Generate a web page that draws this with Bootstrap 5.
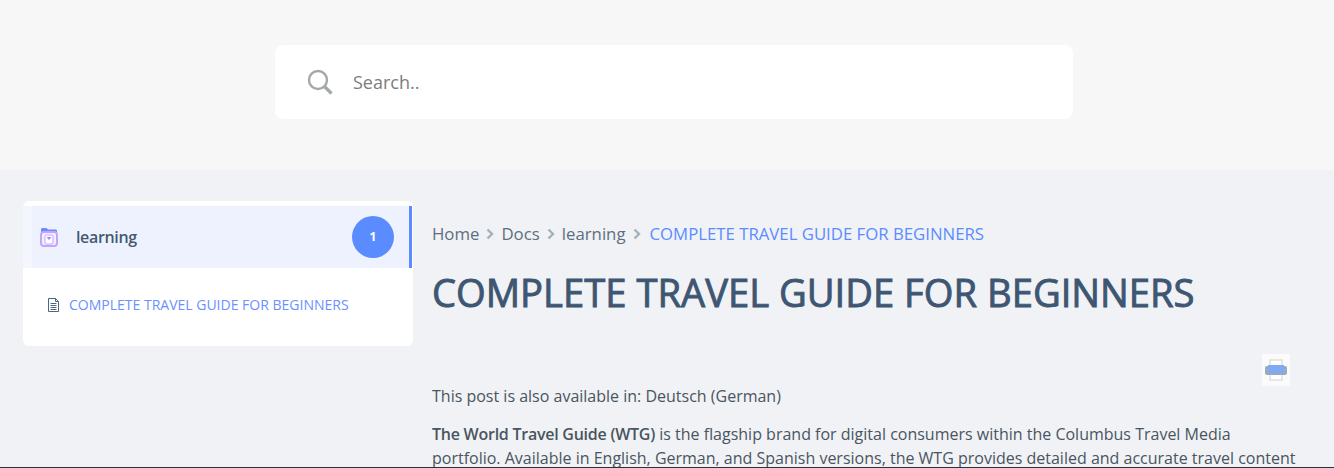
<!DOCTYPE html>
<html lang="en">
<head>
<meta charset="utf-8">
<title>Complete Travel Guide for Beginners</title>
<link rel="stylesheet" href="https://cdn.jsdelivr.net/npm/bootstrap@5.3.0/dist/css/bootstrap.min.css">
<style>
html,body{height:468px;overflow:hidden}
body{background:#f0f2f6;font-family:"Open Sans","Noto Sans",sans-serif;color:#3f4d5c;border-bottom:1px solid #2b3338}
.hero-band{height:170px;background:#f7f7f7;padding-top:45px}
.search-box{width:798px;height:74px;margin-left:275px;background:#fff;border-radius:8px;padding-left:32px;gap:20px}
.search-text{font-size:18px;color:#7d7d7d}
.page-wrap{padding:31px 0 0 23px}
.side-panel{width:390px;height:145px;background:#fff;border-radius:6px;padding-top:5px}
.side-active{height:62px;background:linear-gradient(90deg,#f4f6fe 0,#f4f6fe 9px,#eef2ff 9px);border-right:3px solid #5b8cff;margin-right:1px;padding:0 15px 0 16px}
.side-name{font-size:16px;font-weight:600;letter-spacing:-.35px;color:#435a73;margin-left:17px}
.side-count{width:42px;height:42px;border-radius:50%;background:#5b8cff;color:#fff;font-size:12px;font-weight:700}
.side-doc{padding:26px 0 0 24px;gap:9px;font-size:14px;color:#6b90ff;line-height:22px}
.main-col{width:866px;margin-left:19px;padding-top:18px}
.crumbs{font-size:16.8px;line-height:30px;color:#5d6f80;gap:7px}
.crumbs .cur{color:#5b8cff;margin-left:2px;font-size:16.75px}
.doc-title{font-size:38.2px;font-weight:400;-webkit-text-stroke:.9px #3e5672;color:#3e5672;margin:18px 0 0;line-height:50px;white-space:nowrap}
.print-row{height:32px;margin:37px 0 -2px;padding-right:8px}
.print-chip{width:28px;height:32px;background:#fbfbfc}
.doc-text{font-size:16px;line-height:24px;color:#4a5560;margin:0 0 14px}
.doc-text strong{font-weight:600;letter-spacing:-.25px}
</style>
</head>
<body>
<header class="hero-band">
  <div class="search-box d-flex align-items-center">
    <svg width="26" height="26" viewBox="0 0 26 26" fill="none" stroke="#a3a8a8" aria-hidden="true"><circle cx="11" cy="11" r="9" stroke-width="2.400"/><path d="M17.500 17.500 24.500 24.500" stroke-width="3.200"/></svg>
    <span class="search-text">Search..</span>
  </div>
</header>
<div class="page-wrap d-flex align-items-start">
  <aside class="side-panel">
    <div class="side-active d-flex align-items-center">
      <svg width="20" height="22" viewBox="0 0 20 22" fill="none" aria-hidden="true"><path d="M2 3.500C2 2.500 2.800 2 3.500 2h4l1.500 1.500h7.500C17.500 3.500 18 4 18 5v3H2z" fill="#6f88ff"/><rect x="2" y="6" width="16" height="14" rx="3" stroke="#c3a6fb" stroke-width="2" fill="#f3efff"/><rect x="6" y="9" width="8" height="9" rx="1" stroke="#c3a6fb" fill="#fff"/><path d="M7.500 11h5L10 14z" fill="#a98af5"/></svg>
      <span class="side-name flex-grow-1">learning</span>
      <span class="side-count d-flex align-items-center justify-content-center">1</span>
    </div>
    <div class="side-doc d-flex align-items-center">
      <svg width="13" height="14" viewBox="0 0 13 14" fill="none" stroke="#4c6580" aria-hidden="true"><path d="M1.500.5h7l3 3v10h-10z"/><path d="M8.500.5v3h3"/><path d="M3.500 5.500h6M3.500 7.500h6M3.500 9.500h6M3.500 11.500h6"/></svg>
      <span>COMPLETE TRAVEL GUIDE FOR BEGINNERS</span>
    </div>
  </aside>
  <main class="main-col">
    <nav class="crumbs d-flex align-items-center">
      <span>Home</span>
      <svg width="8" height="12" viewBox="0 0 8 12" fill="none" stroke="#a3b2ba" stroke-width="2.400" aria-hidden="true"><path d="M1.500 1.500 6 6l-4.500 4.500"/></svg>
      <span>Docs</span>
      <svg width="8" height="12" viewBox="0 0 8 12" fill="none" stroke="#a3b2ba" stroke-width="2.400" aria-hidden="true"><path d="M1.500 1.500 6 6l-4.500 4.500"/></svg>
      <span>learning</span>
      <svg width="8" height="12" viewBox="0 0 8 12" fill="none" stroke="#a3b2ba" stroke-width="2.400" aria-hidden="true"><path d="M1.500 1.500 6 6l-4.500 4.500"/></svg>
      <span class="cur">COMPLETE TRAVEL GUIDE FOR BEGINNERS</span>
    </nav>
    <h1 class="doc-title">COMPLETE TRAVEL GUIDE FOR BEGINNERS</h1>
    <div class="print-row d-flex justify-content-end">
      <div class="print-chip d-flex align-items-center justify-content-center">
        <svg width="24" height="22" viewBox="0 0 24 22" aria-hidden="true"><rect x="6" y="1" width="12" height="7" fill="#fff" stroke="#ccd3dc"/><rect x="6" y="15" width="12" height="6" fill="#fff" stroke="#ccd3dc"/><rect x="1" y="7" width="22" height="9" rx="2" fill="#9aaabb"/><rect x="4" y="6" width="16" height="8" fill="#7fa8f5"/></svg>
      </div>
    </div>
    <p class="doc-text">This post is also available in: Deutsch (German)</p>
    <p class="doc-text"><strong>The World Travel Guide (WTG)</strong> is the flagship brand for digital consumers within the Columbus Travel Media portfolio. Available in English, German, and Spanish versions, the WTG provides detailed and accurate travel content</p>
  </main>
</div>
<script src="https://cdn.jsdelivr.net/npm/bootstrap@5.3.0/dist/js/bootstrap.bundle.min.js"></script>
</body>
</html>
